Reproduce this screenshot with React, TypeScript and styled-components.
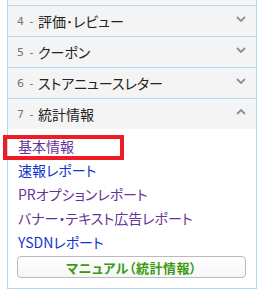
import React from "react";
import styled, { createGlobalStyle } from "styled-components";

const Global = createGlobalStyle`
  html, body { margin: 0; padding: 0; background: #fff; }
  body { font-family: "Noto Sans CJK JP", "Noto Sans", sans-serif; }
`;

const Panel = styled.div`
  position: relative;
  margin-left: 7px;
  width: 248px;
  border-left: 1px solid #b5d9ee;
  border-right: 1px solid #b5d9ee;
  border-bottom: 1px solid #b5d9ee;
`;

const TopStrip = styled.div`
  height: 5px;
  background: #f4f4f4;
`;

const Header = styled.div`
  display: flex;
  align-items: center;
  height: 30px;
  padding: 0 8px 0 9px;
  background: #f4f4f4;
  border-top: 1px solid #b5d9ee;
`;

const Num = styled.span`
  font-family: "DejaVu Sans", sans-serif;
  font-size: 11px;
  color: #777;
  width: 21px;
  word-spacing: 2px;
  flex: none;
  white-space: nowrap;
`;

const Title = styled.span`
  flex: 1;
  font-size: 14px;
  color: #222;
  font-feature-settings: "palt";
  white-space: nowrap;
`;

const Chevron = styled.svg`
  flex: none;
  width: 10px;
  height: 6px;
  margin-top: -5px;
  margin-right: 2px;
`;

const Body = styled.div`
  background: #fff;
  padding: 5px 10px 10px 10px;
`;

const LinkItem = styled.a<{ $visited?: boolean }>`
  display: block;
  height: 24px;
  line-height: 24px;
  font-size: 14px;
  font-feature-settings: "palt";
  text-decoration: none;
  white-space: nowrap;
  color: ${(p) => (p.$visited ? "#663399" : "#1133cc")};
`;

const ManualButton = styled.div`
  margin: 2px 0 0 -1px;
  height: 20px;
  border: 1px solid #bbb;
  border-radius: 4px;
  background: linear-gradient(#fff, #f6f6f6);
  display: flex;
  align-items: center;
  justify-content: center;
  font-size: 13px;
  font-weight: bold;
  color: #3a9a10;
  font-feature-settings: "palt";
  letter-spacing: 0.5px;
`;

const Highlight = styled.div`
  position: absolute;
  left: -5px;
  top: 135px;
  width: 113px;
  height: 17px;
  border: 4px solid #ee1c25;
  pointer-events: none;
`;

const Down = () => (
  <Chevron viewBox="0 0 10 6">
    <polyline points="1,1 5,5 9,1" fill="none" stroke="#7f93a8" strokeWidth="1.8" />
  </Chevron>
);

const Up = () => (
  <Chevron viewBox="0 0 10 6">
    <polyline points="1,5 5,1 9,5" fill="none" stroke="#7f93a8" strokeWidth="1.8" />
  </Chevron>
);

const rows = [
  { n: "4 -", t: "評価･レビュー" },
  { n: "5 -", t: "クーポン" },
  { n: "6 -", t: "ストアニュースレター" },
];

const links = [
  { t: "基本情報", v: true },
  { t: "速報レポート", v: false },
  { t: "PRオプションレポート", v: true },
  { t: "バナー・テキスト広告レポート", v: true },
  { t: "YSDNレポート", v: false },
];

export default function App() {
  return (
    <>
      <Global />
      <Panel>
        <TopStrip />
        {rows.map((r) => (
          <Header key={r.n}>
            <Num>{r.n}</Num>
            <Title>{r.t}</Title>
            <Down />
          </Header>
        ))}
        <Header>
          <Num>7 -</Num>
          <Title>統計情報</Title>
          <Up />
        </Header>
        <Body>
          {links.map((l) => (
            <LinkItem key={l.t} href="#" $visited={l.v}>
              {l.t}
            </LinkItem>
          ))}
          <ManualButton>マニュアル（統計情報）</ManualButton>
        </Body>
        <Highlight />
      </Panel>
    </>
  );
}
